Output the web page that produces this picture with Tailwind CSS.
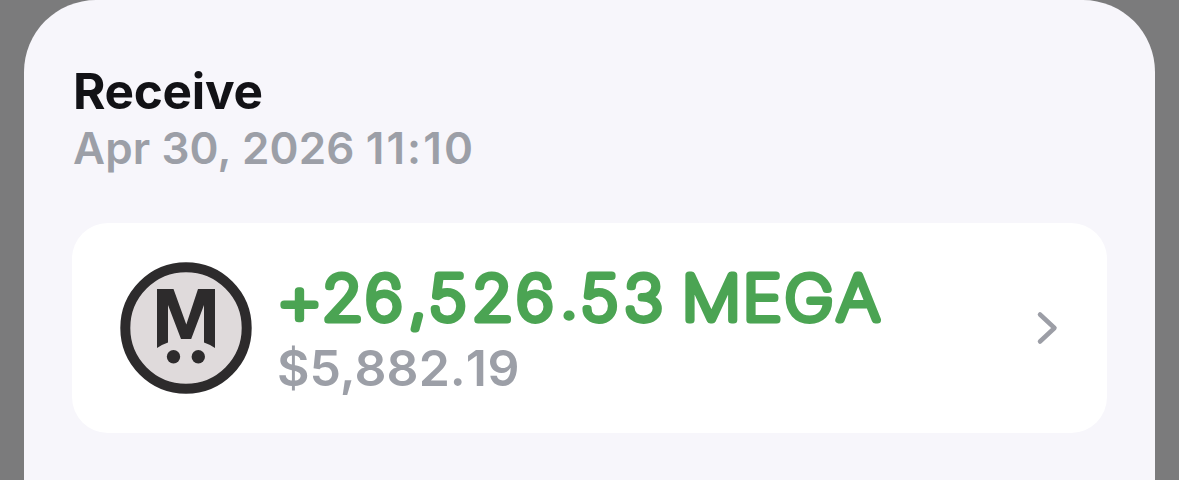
<!DOCTYPE html>
<html lang="en">
<head>
<meta charset="utf-8">
<title>Receive</title>
<script src="https://cdn.jsdelivr.net/npm/@tailwindcss/browser@4"></script>
</head>
<body class="h-[480px] overflow-hidden bg-[#7b7b7c] px-6 font-['Inter','Liberation_Sans',sans-serif]">
<main class="h-[480px] rounded-t-[72px] bg-[#f7f6fb] pl-12 pr-12 pt-[63px]">
  <header class="h-[160px] pl-px">
    <h1 class="h-[56px] whitespace-nowrap text-[49.5px] leading-[56px] font-bold tracking-[-0.3px] text-[#121216]">Receive</h1>
    <p class="h-[56px] whitespace-nowrap text-[44px] leading-[58px] font-semibold tracking-[0.120px] text-[#9c9fa7]">Apr 30, 2026 <span class="tracking-[2.100px]">11:10</span></p>
  </header>
  <section class="flex h-[210px] items-center rounded-[36px] bg-white pl-12 pr-[49px]">
    <svg class="size-[132px] shrink-0" viewBox="0 0 132 132">
      <circle cx="66" cy="66" r="60.700" fill="#dfdadb" stroke="#2d2b2c" stroke-width="10"/>
      <path fill="#2d2b2c" d="M37 27h16.500L66.300 62.500 78 27h17v59q-5-3.500-11-5.500V43L71.200 77H61L48 43v37.500q-6 2-11 5.500Z"/>
      <circle cx="53.500" cy="94.700" r="6.700" fill="#2d2b2c"/>
      <circle cx="78.300" cy="94.700" r="6.700" fill="#2d2b2c"/>
    </svg>
    <div class="ml-6 h-[150px] min-w-0 flex-1">
      <svg class="block h-[84px] w-[620px] overflow-visible" viewBox="0 0 620 84">
        <text transform="scale(1.085 1)" class="fill-[#4ba453] stroke-[#4ba453] stroke-[7.100px] text-[61px] font-thin [stroke-linejoin:round]"><tspan x="0" y="71" class="text-[68px]">+</tspan><tspan y="67.200" x="42.300 82.200 122.500 141 180.600 221.400">26,526</tspan><tspan x="260.900" y="67.200" class="font-medium stroke-[1.500px]">.</tspan><tspan x="281 321 351 374 430.300 468.800 517" y="67.200">53 MEGA</tspan></text>
      </svg>
      <p class="h-[60px] pl-px whitespace-nowrap text-[50px] leading-[62px] font-semibold tracking-[0.050px] text-[#9c9fa7]">$5,882.<span class="tracking-[0.500px]">1</span><span>9</span></p>
    </div>
    <svg class="h-[34px] w-[22px] shrink-0" viewBox="0 0 22 34" fill="none" stroke="#9c9ea6" stroke-width="4.500" stroke-linecap="round" stroke-linejoin="round"><path d="M4 3.500 18.500 17 4 30.500"/></svg>
  </section>
</main>
</body>
</html>
